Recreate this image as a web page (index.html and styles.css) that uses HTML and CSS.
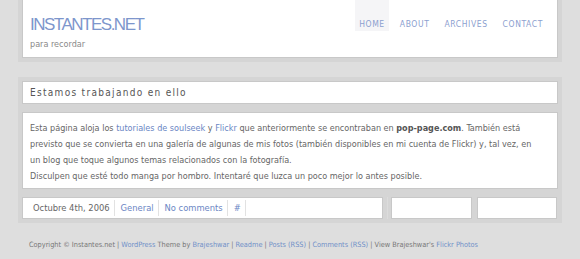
FILE: index.html
```html
<!DOCTYPE html>
<html lang="es">
  <head>
    <meta charset="UTF-8" />
    <meta name="viewport" content="width=device-width, initial-scale=1.0" />
    <title>Instantes.net</title>
    <link rel="stylesheet" href="styles.css">
  </head>
  <body>
    <div class="wrap">
      <header class="block block-header">
        <div class="box header-box">
          <div class="brand">
            <h1 class="site-title">INSTANTES.NET</h1>
            <p class="tagline">para recordar</p>
          </div>
          <ul class="nav">
            <li><a class="current" href="#">Home</a></li>
            <li><a href="#">About</a></li>
            <li><a href="#">Archives</a></li>
            <li><a href="#">Contact</a></li>
          </ul>
        </div>
      </header>

      <main class="block block-main">
        <div class="box post-title">
          <h2>Estamos trabajando en ello</h2>
        </div>

        <div class="box post-body">
          <p>
            Esta página aloja los <a href="#">tutoriales de soulseek</a> y
            <a href="#">Flickr</a> que anteriormente se encontraban en
            <strong>pop-page.com</strong>. También está previsto que se
            convierta en una galería de algunas de mis fotos (también
            disponibles en mi cuenta de Flickr) y, tal vez, en un blog que
            toque algunos temas relacionados con la fotografía.<br />
            Disculpen que esté todo manga por hombro. Intentaré que luzca un
            poco mejor lo antes posible.
          </p>
        </div>

        <div class="post-row">
          <div class="main-col">
            <div class="box post-meta">
              <span class="meta-item">Octubre 4th, 2006</span>
              <a class="meta-item" href="#">General</a>
              <a class="meta-item" href="#">No comments</a>
              <a class="meta-item" href="#">#</a>
            </div>
          </div>
          <div class="side-col">
            <div class="box side-box side-box-a"></div>
            <div class="box side-box side-box-b"></div>
          </div>
        </div>
      </main>

      <footer class="footer">
        Copyright © Instantes.net | <a href="#">WordPress</a> Theme by
        <a href="#">Brajeshwar</a> | <a href="#">Readme</a> |
        <a href="#">Posts (RSS)</a> | <a href="#">Comments (RSS)</a> | View
        Brajeshwar's <a href="#">Flickr Photos</a>
      </footer>
    </div>
  </body>
</html>
```

FILE: styles.css
```css
body {
  margin: 0;
  background-color: #dedede;
  color: #666;
  font-family: "DejaVu Sans Condensed", "DejaVu Sans", sans-serif;
  font-stretch: semi-condensed;
}
a {
  color: #6a86c4;
  text-decoration: none;
}
.wrap {
  margin: 0 18px;
}
.block {
  background-color: #d5d5d5;
}
.box {
  background-color: #fff;
  border: 1px solid #c8c8c8;
}
.block-header {
  padding: 0 4px 4px;
}
.header-box {
  display: flex;
  justify-content: space-between;
  height: 58px;
  box-sizing: border-box;
  border-top: none;
}
.brand {
  padding: 15px 0 0 7px;
}
.site-title {
  margin: 0;
  font-family: "Liberation Sans", Arial, sans-serif;
  font-weight: normal;
  font-size: 17px;
  line-height: 20px;
  letter-spacing: -1.5px;
  color: #7d96cc;
}
.tagline {
  margin: 3px 0 0;
  font-size: 9px;
  line-height: 12px;
  color: #8a8a8a;
}
.nav {
  display: flex;
  gap: 7px;
  margin: 0;
  padding: 0 10px 0 0;
  list-style: none;
}
.nav a {
  display: block;
  height: 31px;
  padding: 19px 4px 0;
  box-sizing: border-box;
  font-size: 8.5px;
  line-height: 10px;
  letter-spacing: 0.6px;
  text-transform: uppercase;
  color: #8ca0cf;
}
.nav a.current {
  background-color: #f5f5f7;
}
.block-main {
  margin-top: 15px;
  padding: 4px 4px 0;
}
.post-title h2 {
  margin: 0;
  padding: 0 7px;
  font-size: 10px;
  line-height: 21px;
  font-weight: normal;
  letter-spacing: 1.3px;
  color: #555;
}
.post-body {
  margin-top: 8px;
  padding: 7px 13px 4px 7px;
}
.post-body p {
  margin: 0;
  font-size: 9px;
  line-height: 16px;
}
.post-body strong {
  color: #555;
}
.post-row {
  display: flex;
  padding: 8px 0 4px;
}
.main-col {
  padding-right: 4px;
}
.post-meta {
  display: flex;
  align-items: center;
  width: 361px;
  height: 22px;
  box-sizing: border-box;
  padding: 3px 0 3px 4px;
}
.meta-item {
  padding: 0 4px 0 6px;
  font-size: 9.3px;
  line-height: 16px;
  border-right: 1px solid #e2e2e2;
}
.side-col {
  display: flex;
  gap: 5px;
  padding-left: 3px;
  border-left: 1px solid #dcdcdc;
}
.side-box {
  height: 22px;
  box-sizing: border-box;
}
.side-box-a {
  width: 81px;
}
.side-box-b {
  width: 80px;
}
.footer {
  padding: 17px 11px 0;
  font-size: 7.3px;
  line-height: 10px;
  color: #777;
}
.footer a {
  color: #7090c8;
}
```
